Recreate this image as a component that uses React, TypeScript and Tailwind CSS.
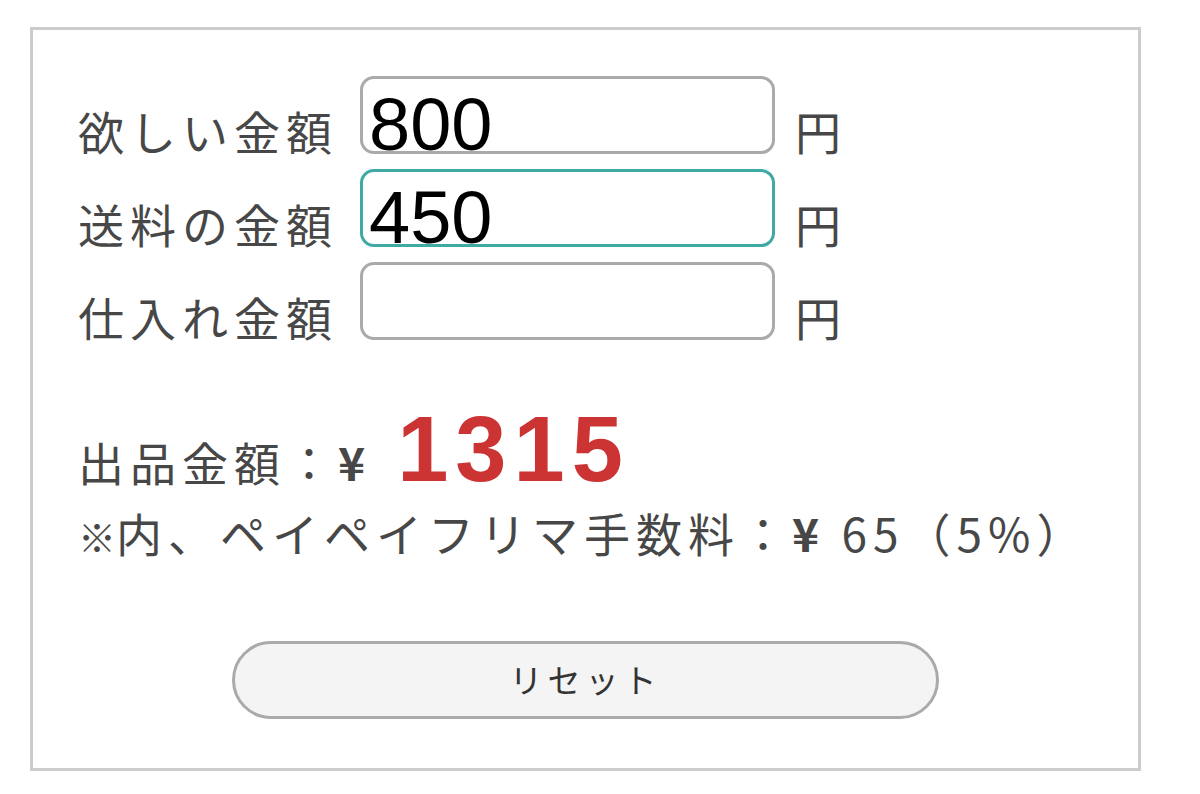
import { useState } from 'react'

function PriceRow({ label, value, active, onChange }: {
  label: string
  value: string
  active?: boolean
  onChange: (v: string) => void
}) {
  return (
    <div className="flex items-baseline">
      <span className="w-[282px] shrink-0 font-['Noto_Sans_CJK_JP','Noto_Sans',sans-serif] text-[46px] leading-none tracking-[6px] text-[#474747]">
        {label}
      </span>
      <input
        type="text"
        inputMode="numeric"
        value={value}
        onChange={e => onChange(e.target.value)}
        className={`w-[415px] h-[78px] shrink-0 rounded-[14px] border-[3px] bg-white pl-[6px] pt-[18px] pb-0 font-['Liberation_Sans',Arial,sans-serif] text-[74px] leading-[54px] text-black outline-none ${
          active ? 'border-[#3fa9a4]' : 'border-[#aaaaaa]'
        }`}
      />
      <span className="ml-[20px] font-['Noto_Sans_CJK_JP','Noto_Sans',sans-serif] text-[46px] leading-none text-[#474747]">円</span>
    </div>
  )
}

export default function App() {
  const [want, setWant] = useState('800')
  const [ship, setShip] = useState('450')
  const [cost, setCost] = useState('')

  const w = Number(want) || 0
  const s = Number(ship) || 0
  const price = Math.floor((w + s) / 0.95)
  const fee = Math.floor(price * 0.05)
  void cost

  return (
    <div className="w-[1200px] h-[794px] bg-white pt-[27px] pl-[30px]">
      <div className="w-[1111px] h-[744px] border-[3px] border-[#cccccc] pl-[45px] pt-[46px]">
        <div className="flex flex-col gap-[15px]">
          <PriceRow label="欲しい金額" value={want} onChange={setWant} />
          <PriceRow label="送料の金額" value={ship} active onChange={setShip} />
          <PriceRow label="仕入れ金額" value={cost} onChange={setCost} />
        </div>

        <div className="mt-[63px] flex items-baseline font-['Noto_Sans_CJK_JP','Noto_Sans',sans-serif] text-[#474747]">
          <span className="text-[46px] leading-none tracking-[6px]">出品金額：<span className="font-bold">¥</span></span>
          <span className="ml-[26px] font-['Liberation_Sans',Arial,sans-serif] text-[92px] font-bold leading-none tracking-[7px] text-[#cc3333]">
            {price}
          </span>
        </div>
        <div className="mt-[14px] font-['Noto_Sans_CJK_JP','Noto_Sans',sans-serif] text-[46px] leading-none tracking-[6px] text-[#474747]">
          <span className="text-[38px] font-bold tracking-normal">※</span>内、ペイペイフリマ手数料：<span className="font-bold">¥</span> {fee}（5%）
        </div>

        <div className="mt-[86px] flex justify-center pr-[45px]">
          <button
            type="button"
            onClick={() => { setWant(''); setShip(''); setCost('') }}
            className="w-[707px] h-[78px] rounded-full border-[3px] border-[#aaaaaa] bg-[#f4f4f4] font-['Noto_Sans_CJK_JP','Noto_Sans',sans-serif] text-[33px] tracking-[5px] text-[#333333]"
          >
            リセット
          </button>
        </div>
      </div>
    </div>
  )
}
